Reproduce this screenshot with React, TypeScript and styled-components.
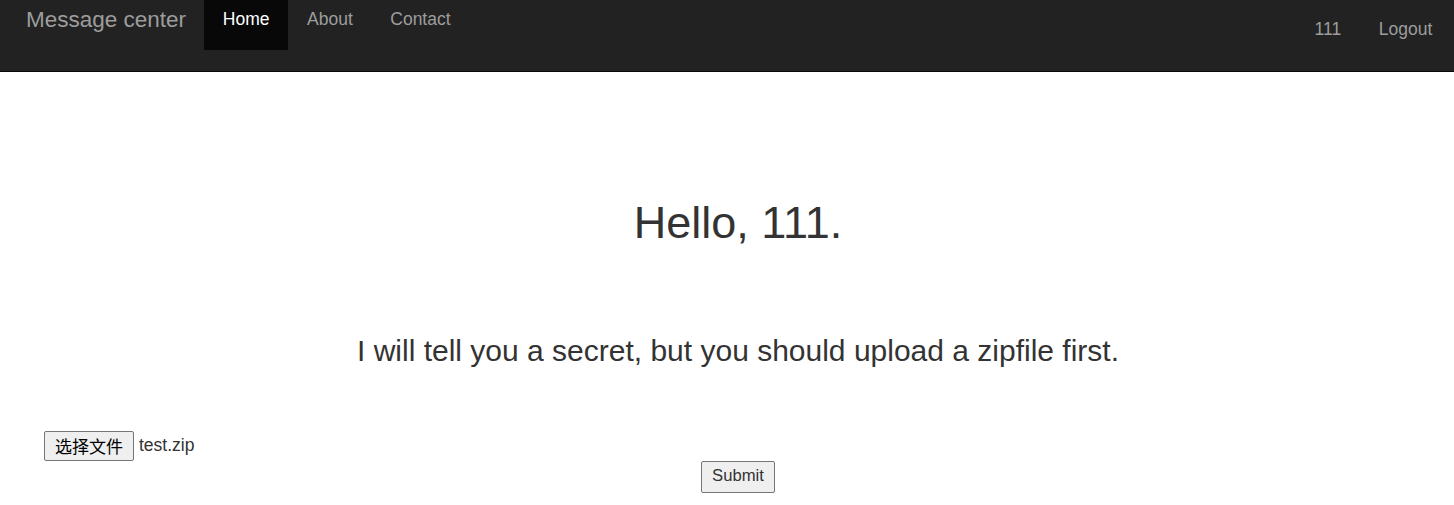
import React from "react";
import styled, { createGlobalStyle } from "styled-components";

const GlobalStyle = createGlobalStyle`
  html, body {
    margin: 0;
    padding: 0;
    background: #fff;
  }
  body {
    font-family: "Liberation Sans", Arial, "Noto Sans CJK SC", sans-serif;
    color: #333;
  }
  * { box-sizing: border-box; }
`;

const Navbar = styled.nav`
  display: flex;
  justify-content: space-between;
  align-items: flex-start;
  height: 72px;
  background: #222;
  border-bottom: 1px solid #080808;
  padding: 0 3px 0 7px;
`;

const NavGroup = styled.div`
  display: flex;
  align-items: flex-start;
`;

const Brand = styled.a`
  display: block;
  font-size: 22.5px;
  line-height: 25px;
  color: #9d9d9d;
  padding: 7px 18px 7px 19px;
  text-decoration: none;
  cursor: pointer;
`;

const NavList = styled.ul`
  display: flex;
  list-style: none;
  margin: 0;
  padding: 0;
`;

const NavLink = styled.a<{ $active?: boolean; $top: number }>`
  display: block;
  font-size: 17.5px;
  line-height: 25px;
  padding: ${(p) => p.$top}px 18.75px 18px;
  color: ${(p) => (p.$active ? "#fff" : "#9d9d9d")};
  background: ${(p) => (p.$active ? "#080808" : "transparent")};
  text-decoration: none;
  cursor: pointer;
`;

const Main = styled.main`
  padding-left: 22px;
  text-align: center;
`;

const Title = styled.h1`
  margin: 126px 0 0;
  font-size: 45px;
  font-weight: 500;
  line-height: 1.1;
`;

const Subtitle = styled.h3`
  margin: 86px 0 0;
  font-size: 30px;
  font-weight: 500;
  line-height: 1.1;
`;

const UploadForm = styled.form`
  margin-top: 64px;
  display: flex;
  flex-direction: column;
  align-items: center;
`;

const FileRow = styled.div`
  align-self: stretch;
  display: flex;
  align-items: center;
  gap: 5px;
  padding-left: 22px;
  color: #333;
`;

const HiddenInput = styled.input`
  display: none;
`;

const FileButton = styled.label`
  display: inline-flex;
  align-items: center;
  justify-content: center;
  height: 30px;
  padding: 0 10px;
  font-family: "Noto Sans CJK SC", "Liberation Sans", sans-serif;
  font-size: 17px;
  line-height: 1;
  color: #000;
  background: #efefef;
  border: 1px solid #767676;
  border-radius: 2px;
  cursor: pointer;
`;

const FileName = styled.span`
  font-size: 17.5px;
  color: #333;
`;

const SubmitButton = styled.button`
  height: 32px;
  padding: 0 10px;
  font-family: "Liberation Sans", Arial, sans-serif;
  font-size: 16.67px;
  line-height: 1;
  color: #333;
  background: #efefef;
  border: 1px solid #767676;
  border-radius: 2px;
  cursor: pointer;
`;

export default function App() {
  return (
    <>
      <GlobalStyle />
      <Navbar>
        <NavGroup>
          <Brand>Message center</Brand>
          <NavList>
            <li><NavLink $top={7} $active>Home</NavLink></li>
            <li><NavLink $top={7}>About</NavLink></li>
            <li><NavLink $top={7}>Contact</NavLink></li>
          </NavList>
        </NavGroup>
        <NavList>
          <li><NavLink $top={17}>111</NavLink></li>
          <li><NavLink $top={17}>Logout</NavLink></li>
        </NavList>
      </Navbar>
      <Main>
        <Title>Hello, 111.</Title>
        <Subtitle>I will tell you a secret, but you should upload a zipfile first.</Subtitle>
        <UploadForm onSubmit={(e) => e.preventDefault()}>
          <FileRow>
            <FileButton>
              选择文件
              <HiddenInput type="file" />
            </FileButton>
            <FileName>test.zip</FileName>
          </FileRow>
          <SubmitButton type="submit">Submit</SubmitButton>
        </UploadForm>
      </Main>
    </>
  );
}
